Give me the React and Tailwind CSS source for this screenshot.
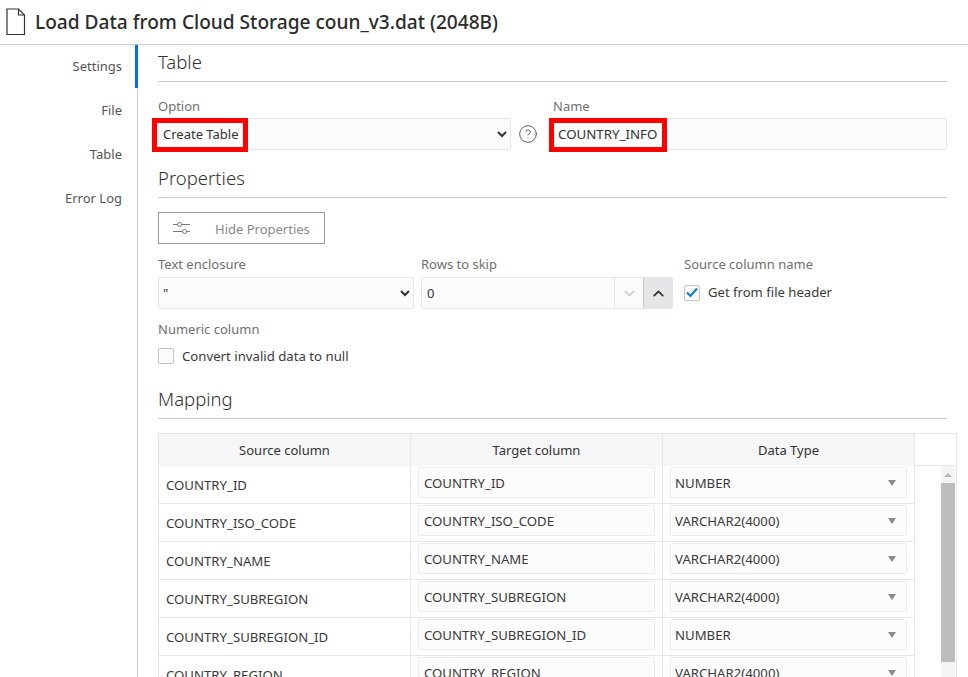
import { ChevronDown, ChevronUp, CircleHelp } from "lucide-react";

const rows = [
  ["COUNTRY_ID", "NUMBER"],
  ["COUNTRY_ISO_CODE", "VARCHAR2(4000)"],
  ["COUNTRY_NAME", "VARCHAR2(4000)"],
  ["COUNTRY_SUBREGION", "VARCHAR2(4000)"],
  ["COUNTRY_SUBREGION_ID", "NUMBER"],
  ["COUNTRY_REGION", "VARCHAR2(4000)"],
];

function SectionTitle({ children }) {
  return (
    <h2 className="h-[37px] border-b border-[#cccccc] text-[18.5px] leading-[34px] font-light text-[#333333]">
      {children}
    </h2>
  );
}

function Label({ children }) {
  return <div className="h-5 text-[13px] leading-[16px] text-[#6f6f6f]">{children}</div>;
}

function FileIcon() {
  return (
    <svg width="20" height="28" viewBox="0 0 20 28" fill="none" stroke="#333333" strokeWidth="1.2">
      <path d="M1 1h11.5L18.5 7v19.5H1z" />
      <path d="M12.5 1v6h6" />
    </svg>
  );
}

function SlidersIcon() {
  return (
    <svg width="18" height="14" viewBox="0 0 18 14" fill="none" stroke="#777777" strokeWidth="1">
      <path d="M0 3.5h4.5M8.5 3.5H17M0 10.5h9.5M13.5 10.5H17" />
      <circle cx="6.5" cy="3.5" r="2" />
      <circle cx="11.5" cy="10.5" r="2" />
    </svg>
  );
}

function CheckBox({ checked }) {
  return (
    <span className="flex h-4 w-4 items-center justify-center rounded-[2px] border border-[#c4c4c4] bg-[#fbfbfb]">
      {checked && (
        <svg width="12" height="11" viewBox="0 0 12 11" fill="none" stroke="#0d7fc4" strokeWidth="2.2">
          <path d="M1 5.5l3.5 3.5L11 1.5" />
        </svg>
      )}
    </span>
  );
}

function Select({ value, className }) {
  return (
    <select
      defaultValue={value}
      className={`h-8 rounded-[2px] border border-[#e6e6e6] bg-[#fbfbfb] text-[13px] text-[#333333] ${className}`}
    >
      <option>{value}</option>
    </select>
  );
}

function MappingRow({ source, type }) {
  return (
    <div className="grid h-[38px] grid-cols-[252px_252px_252px] border-b border-[#e6e6e6] text-[13.2px] text-[#3a3a3a]">
      <div className="border-r border-[#e6e6e6] pt-[9px] pl-[7px] leading-[20px]">{source}</div>
      <div className="border-r border-[#e6e6e6] pt-px pl-[7px]">
        <div className="h-[31px] w-[237px] rounded-[2px] border border-[#ececec] bg-[#fcfcfc] pl-[5px] leading-[30px]">
          {source}
        </div>
      </div>
      <div className="border-r border-[#e6e6e6] pt-px pl-[7px]">
        <div className="flex h-[31px] w-[237px] items-center justify-between rounded-[2px] border border-[#ececec] bg-[#fcfcfc] pr-[10px] pl-[4px]">
          <span className="pt-[2px]">{type}</span>
          <span className="h-0 w-0 border-x-[4.5px] border-t-[6px] border-x-transparent border-t-[#8a8a8a]" />
        </div>
      </div>
    </div>
  );
}

export default function App() {
  return (
    <div className="h-[677px] w-[968px] overflow-hidden bg-white font-['Noto_Sans','Open_Sans',sans-serif]">
      <header className="flex h-[45px] items-center gap-[9px] border-b border-[#cccccc] pl-[6px]">
        <FileIcon />
        <h1 className="text-[19.1px] font-medium text-[#2b2b2b]">Load Data from Cloud Storage coun_v3.dat (2048B)</h1>
      </header>

      <div className="flex h-[632px]">
        {/* Sidebar */}
        <aside className="w-[138px] shrink-0 border-r border-[#cccccc] text-right text-[13px] text-[#555555]">
          <div className="flex h-[43px] items-center justify-end border-r-[3px] border-[#0572ce] pr-[13px] -mr-px">Settings</div>
          <div className="mt-px flex h-11 items-center justify-end pr-[15px]">File</div>
          <div className="flex h-11 items-center justify-end pr-[15px]">Table</div>
          <div className="flex h-11 items-center justify-end pr-[15px]">Error Log</div>
        </aside>

        {/* Main */}
        <main className="w-[809px] pl-5">
          <SectionTitle>Table</SectionTitle>

          <div className="mt-4 flex">
            <div className="relative w-[353px]">
              <Label>Option</Label>
              <Select value="Create Table" className="w-full" />
              <div className="absolute top-5 -left-[6px] h-[34px] w-[96px] border-[5px] border-[#ff0000]" />
            </div>
            <div className="w-[42px] pt-[26px] pl-[7px]">
              <CircleHelp size={20} strokeWidth={1} className="text-[#444444]" />
            </div>
            <div className="relative w-[394px]">
              <Label>Name</Label>
              <div className="h-8 rounded-[2px] border border-[#e6e6e6] bg-[#fbfbfb] pl-[4px] text-[13.3px] leading-[30px] text-[#333333]">
                COUNTRY_INFO
              </div>
              <div className="absolute top-5 -left-[4px] h-[34px] w-[118px] border-[5px] border-[#ff0000]" />
            </div>
          </div>

          <div className="mt-[11px]">
            <SectionTitle>Properties</SectionTitle>
          </div>

          <button className="mt-[14px] flex h-8 w-[167px] items-center border border-[#9a9a9a] pl-[14px] text-[13px] text-[#8a8a8a]">
            <SlidersIcon />
            <span className="ml-[24px] pt-[3px]">Hide Properties</span>
          </button>

          <div className="mt-[12px] flex">
            <div className="w-[256px]">
              <Label>Text enclosure</Label>
              <div className="h-px" />
              <Select value={'"'} className="w-full" />
            </div>
            <div className="ml-[7px] w-[252px]">
              <Label>Rows to skip</Label>
              <div className="mt-px flex h-8 rounded-[2px] border border-[#e6e6e6] bg-[#fbfbfb] text-[13px] leading-[30px] text-[#333333]">
                <span className="flex-1 pl-[5px]">0</span>
                <span className="flex w-[29px] items-center justify-center border-l border-[#e6e6e6]">
                  <ChevronDown size={17} strokeWidth={2} className="text-[#cccccc]" />
                </span>
                <span className="flex w-[29px] items-center justify-center border-l border-[#c8c8c8] bg-[#e4e6e8]">
                  <ChevronUp size={17} strokeWidth={2.5} className="text-[#333333]" />
                </span>
              </div>
            </div>
            <div className="ml-[11px]">
              <Label>Source column name</Label>
              <div className="mt-[7px] flex items-center gap-2 text-[13.1px] text-[#3a3a3a]">
                <CheckBox checked />
                <span>Get from file header</span>
              </div>
            </div>
          </div>

          <div className="mt-[12px]">
            <Label>Numeric column</Label>
          </div>
          <div className="mt-[7px] flex h-4 items-center gap-2 text-[13.2px] text-[#3a3a3a]">
            <CheckBox />
            <span className="pt-px">Convert invalid data to null</span>
          </div>

          <div className="mt-[18px]">
            <SectionTitle>Mapping</SectionTitle>
          </div>

          {/* Mapping table */}
          <div className="mt-[14px] -mr-[10px] border-t border-l border-r border-[#e6e6e6]">
            <div className="grid h-[32px] grid-cols-[252px_252px_252px_1fr] border-b border-[#e6e6e6] text-center text-[13px] leading-[32px] text-[#333333]">
              <div className="border-r border-[#e6e6e6] bg-[#f6f6f6]">Source column</div>
              <div className="border-r border-[#e6e6e6] bg-[#f6f6f6]">Target column</div>
              <div className="border-r border-[#e6e6e6] bg-[#f6f6f6]">Data Type</div>
              <div />
            </div>
            <div className="flex">
              <div className="w-[756px]">
                {rows.map(([source, type]) => (
                  <MappingRow key={source} source={source} type={type} />
                ))}
              </div>
              <div className="flex flex-1 justify-end pr-[1px]">
                <div className="h-[220px] w-[14px] bg-[#f4f4f4]">
                  <div className="mx-auto mt-[7px] h-0 w-0 border-x-[4px] border-b-[4px] border-x-transparent border-b-[#b5b5b5]" />
                  <div className="mt-[6px] h-[179px] bg-[#bdbdbd]" />
                </div>
              </div>
            </div>
          </div>
        </main>
      </div>
    </div>
  );
}
